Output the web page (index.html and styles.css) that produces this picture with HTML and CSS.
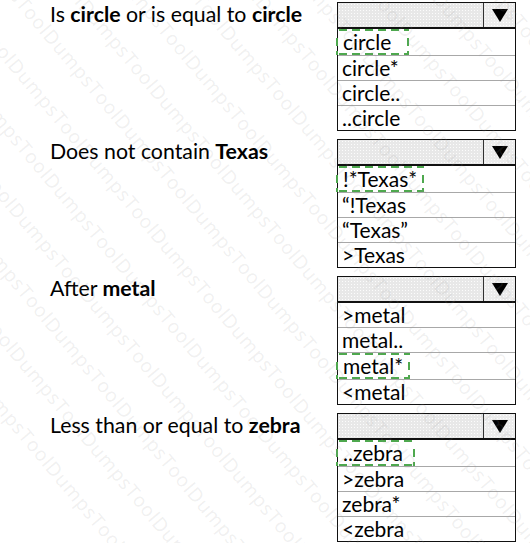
FILE: index.html
```html
<!DOCTYPE html>
<html>
<head>
<meta charset="utf-8">
<link rel="stylesheet" href="styles.css">
</head>
<body>
<div class="page">
  <div class="section">
    <div class="label">Is <b>circle</b> or is equal to <b>circle</b></div>
    <div class="dropdown">
      <div class="head"><div class="field"></div><div class="btn"><span class="tri"></span></div></div>
      <div class="list">
        <div class="item"><span class="sel">circle&nbsp;&nbsp;</span></div>
        <div class="item">circle*</div>
        <div class="item">circle..</div>
        <div class="item">..circle</div>
      </div>
    </div>
  </div>
  <div class="section">
    <div class="label">Does not contain <b>Texas</b></div>
    <div class="dropdown">
      <div class="head"><div class="field"></div><div class="btn"><span class="tri"></span></div></div>
      <div class="list">
        <div class="item"><span class="sel">!*Texas*</span></div>
        <div class="item">“!Texas</div>
        <div class="item">“Texas”</div>
        <div class="item">&gt;Texas</div>
      </div>
    </div>
  </div>
  <div class="section">
    <div class="label">After <b>metal</b></div>
    <div class="dropdown">
      <div class="head"><div class="field"></div><div class="btn"><span class="tri"></span></div></div>
      <div class="list">
        <div class="item">&gt;metal</div>
        <div class="item">metal..</div>
        <div class="item"><span class="sel">metal*</span></div>
        <div class="item">&lt;metal</div>
      </div>
    </div>
  </div>
  <div class="section">
    <div class="label">Less than or equal to <b>zebra</b></div>
    <div class="dropdown">
      <div class="head"><div class="field"></div><div class="btn"><span class="tri"></span></div></div>
      <div class="list">
        <div class="item"><span class="sel">..zebra&nbsp;</span></div>
        <div class="item">&gt;zebra</div>
        <div class="item">zebra*</div>
        <div class="item">&lt;zebra</div>
      </div>
    </div>
  </div>
</div>
<div class="wm" aria-hidden="true">
  <div class="wm-inner">
    <div>DumpsToolDumpsToolDumpsToolDumpsToolDumpsToolDumpsToolDumpsToolDumpsToolDumpsToolDumpsTool</div>
    <div>DumpsToolDumpsToolDumpsToolDumpsToolDumpsToolDumpsToolDumpsToolDumpsToolDumpsToolDumpsTool</div>
    <div>DumpsToolDumpsToolDumpsToolDumpsToolDumpsToolDumpsToolDumpsToolDumpsToolDumpsToolDumpsTool</div>
    <div>DumpsToolDumpsToolDumpsToolDumpsToolDumpsToolDumpsToolDumpsToolDumpsToolDumpsToolDumpsTool</div>
    <div>DumpsToolDumpsToolDumpsToolDumpsToolDumpsToolDumpsToolDumpsToolDumpsToolDumpsToolDumpsTool</div>
    <div>DumpsToolDumpsToolDumpsToolDumpsToolDumpsToolDumpsToolDumpsToolDumpsToolDumpsToolDumpsTool</div>
    <div>DumpsToolDumpsToolDumpsToolDumpsToolDumpsToolDumpsToolDumpsToolDumpsToolDumpsToolDumpsTool</div>
    <div>DumpsToolDumpsToolDumpsToolDumpsToolDumpsToolDumpsToolDumpsToolDumpsToolDumpsToolDumpsTool</div>
    <div>DumpsToolDumpsToolDumpsToolDumpsToolDumpsToolDumpsToolDumpsToolDumpsToolDumpsToolDumpsTool</div>
    <div>DumpsToolDumpsToolDumpsToolDumpsToolDumpsToolDumpsToolDumpsToolDumpsToolDumpsToolDumpsTool</div>
    <div>DumpsToolDumpsToolDumpsToolDumpsToolDumpsToolDumpsToolDumpsToolDumpsToolDumpsToolDumpsTool</div>
    <div>DumpsToolDumpsToolDumpsToolDumpsToolDumpsToolDumpsToolDumpsToolDumpsToolDumpsToolDumpsTool</div>
    <div>DumpsToolDumpsToolDumpsToolDumpsToolDumpsToolDumpsToolDumpsToolDumpsToolDumpsToolDumpsTool</div>
    <div>DumpsToolDumpsToolDumpsToolDumpsToolDumpsToolDumpsToolDumpsToolDumpsToolDumpsToolDumpsTool</div>
    <div>DumpsToolDumpsToolDumpsToolDumpsToolDumpsToolDumpsToolDumpsToolDumpsToolDumpsToolDumpsTool</div>
    <div>DumpsToolDumpsToolDumpsToolDumpsToolDumpsToolDumpsToolDumpsToolDumpsToolDumpsToolDumpsTool</div>
    <div>DumpsToolDumpsToolDumpsToolDumpsToolDumpsToolDumpsToolDumpsToolDumpsToolDumpsToolDumpsTool</div>
    <div>DumpsToolDumpsToolDumpsToolDumpsToolDumpsToolDumpsToolDumpsToolDumpsToolDumpsToolDumpsTool</div>
    <div>DumpsToolDumpsToolDumpsToolDumpsToolDumpsToolDumpsToolDumpsToolDumpsToolDumpsToolDumpsTool</div>
    <div>DumpsToolDumpsToolDumpsToolDumpsToolDumpsToolDumpsToolDumpsToolDumpsToolDumpsToolDumpsTool</div>
    <div>DumpsToolDumpsToolDumpsToolDumpsToolDumpsToolDumpsToolDumpsToolDumpsToolDumpsToolDumpsTool</div>
    <div>DumpsToolDumpsToolDumpsToolDumpsToolDumpsToolDumpsToolDumpsToolDumpsToolDumpsToolDumpsTool</div>
  </div>
</div>
</body>
</html>
```
FILE: styles.css
```css
html, body {
  margin: 0;
  padding: 0;
  background: #fff;
}
body {
  position: relative;
  width: 530px;
  height: 543px;
  overflow: hidden;
  font-family: Lato, "Open Sans", sans-serif;
  color: #000;
}
.page {
  display: flex;
  flex-direction: column;
  padding-top: 2px;
}
.section {
  display: flex;
  height: 137px;
}
.label {
  width: 337px;
  padding-left: 50px;
  font-size: 21.3px;
  line-height: 24px;
  box-sizing: border-box;
  white-space: nowrap;
}
.label b {
  font-weight: 700;
}
.dropdown {
  width: 179px;
  height: 129px;
  box-sizing: border-box;
  border: 1px solid #111;
  display: flex;
  flex-direction: column;
}
.head {
  height: 28px;
  box-sizing: border-box;
  border-bottom: 2px solid #111;
  display: flex;
  background-color: #e8e8e8;
  background-image: radial-gradient(circle, #fcfcfc 0.7px, transparent 0.9px);
  background-size: 3px 3px;
}
.field {
  flex: 1;
}
.btn {
  width: 31px;
  border-left: 1px solid #333;
  display: flex;
  align-items: center;
  justify-content: center;
  background-color: #ececec;
  background-image: radial-gradient(circle, #fcfcfc 0.7px, transparent 0.9px);
  background-size: 3px 3px;
}
.tri {
  width: 0;
  height: 0;
  border-left: 8px solid transparent;
  border-right: 8px solid transparent;
  border-top: 13px solid #000;
  margin-top: 1px;
}
.list {
  display: flex;
  flex-direction: column;
  flex: 1;
}
.item {
  flex: 1;
  font-size: 21px;
  line-height: 24px;
  padding-left: 4px;
  display: flex;
  align-items: center;
  border-top: 1px solid #a8a8a8;
  white-space: nowrap;
}
.item:first-child {
  border-top: none;
}
.sel {
  display: inline-block;
  margin-left: -6px;
  padding: 2px 7px 2px 7px;
  line-height: 22px;
  background-image:
    repeating-linear-gradient(to right, #4ea84e 0 8px, transparent 8px 13px),
    repeating-linear-gradient(to right, #4ea84e 0 8px, transparent 8px 13px),
    repeating-linear-gradient(to bottom, #4ea84e 0 8px, transparent 8px 13px),
    repeating-linear-gradient(to bottom, #4ea84e 0 8px, transparent 8px 13px);
  background-size: 100% 2px, 100% 2px, 2px 100%, 2px 100%;
  background-position: 3px 0, 3px 100%, 0 9px, 100% 9px;
  background-repeat: no-repeat;
}
.wm {
  position: absolute;
  inset: 0;
  overflow: hidden;
  pointer-events: none;
}
.wm-inner {
  position: absolute;
  left: -400px;
  top: -400px;
  width: 1400px;
  height: 1400px;
  transform: rotate(50deg);
  transform-origin: 700px 700px;
  display: flex;
  flex-direction: column;
  gap: 24px;
  padding-top: 20px;
  font-family: "Open Sans", sans-serif;
  font-size: 19px;
  line-height: 22px;
  color: rgba(150, 150, 150, 0.15);
  white-space: nowrap;
  letter-spacing: 1px;
}
```
